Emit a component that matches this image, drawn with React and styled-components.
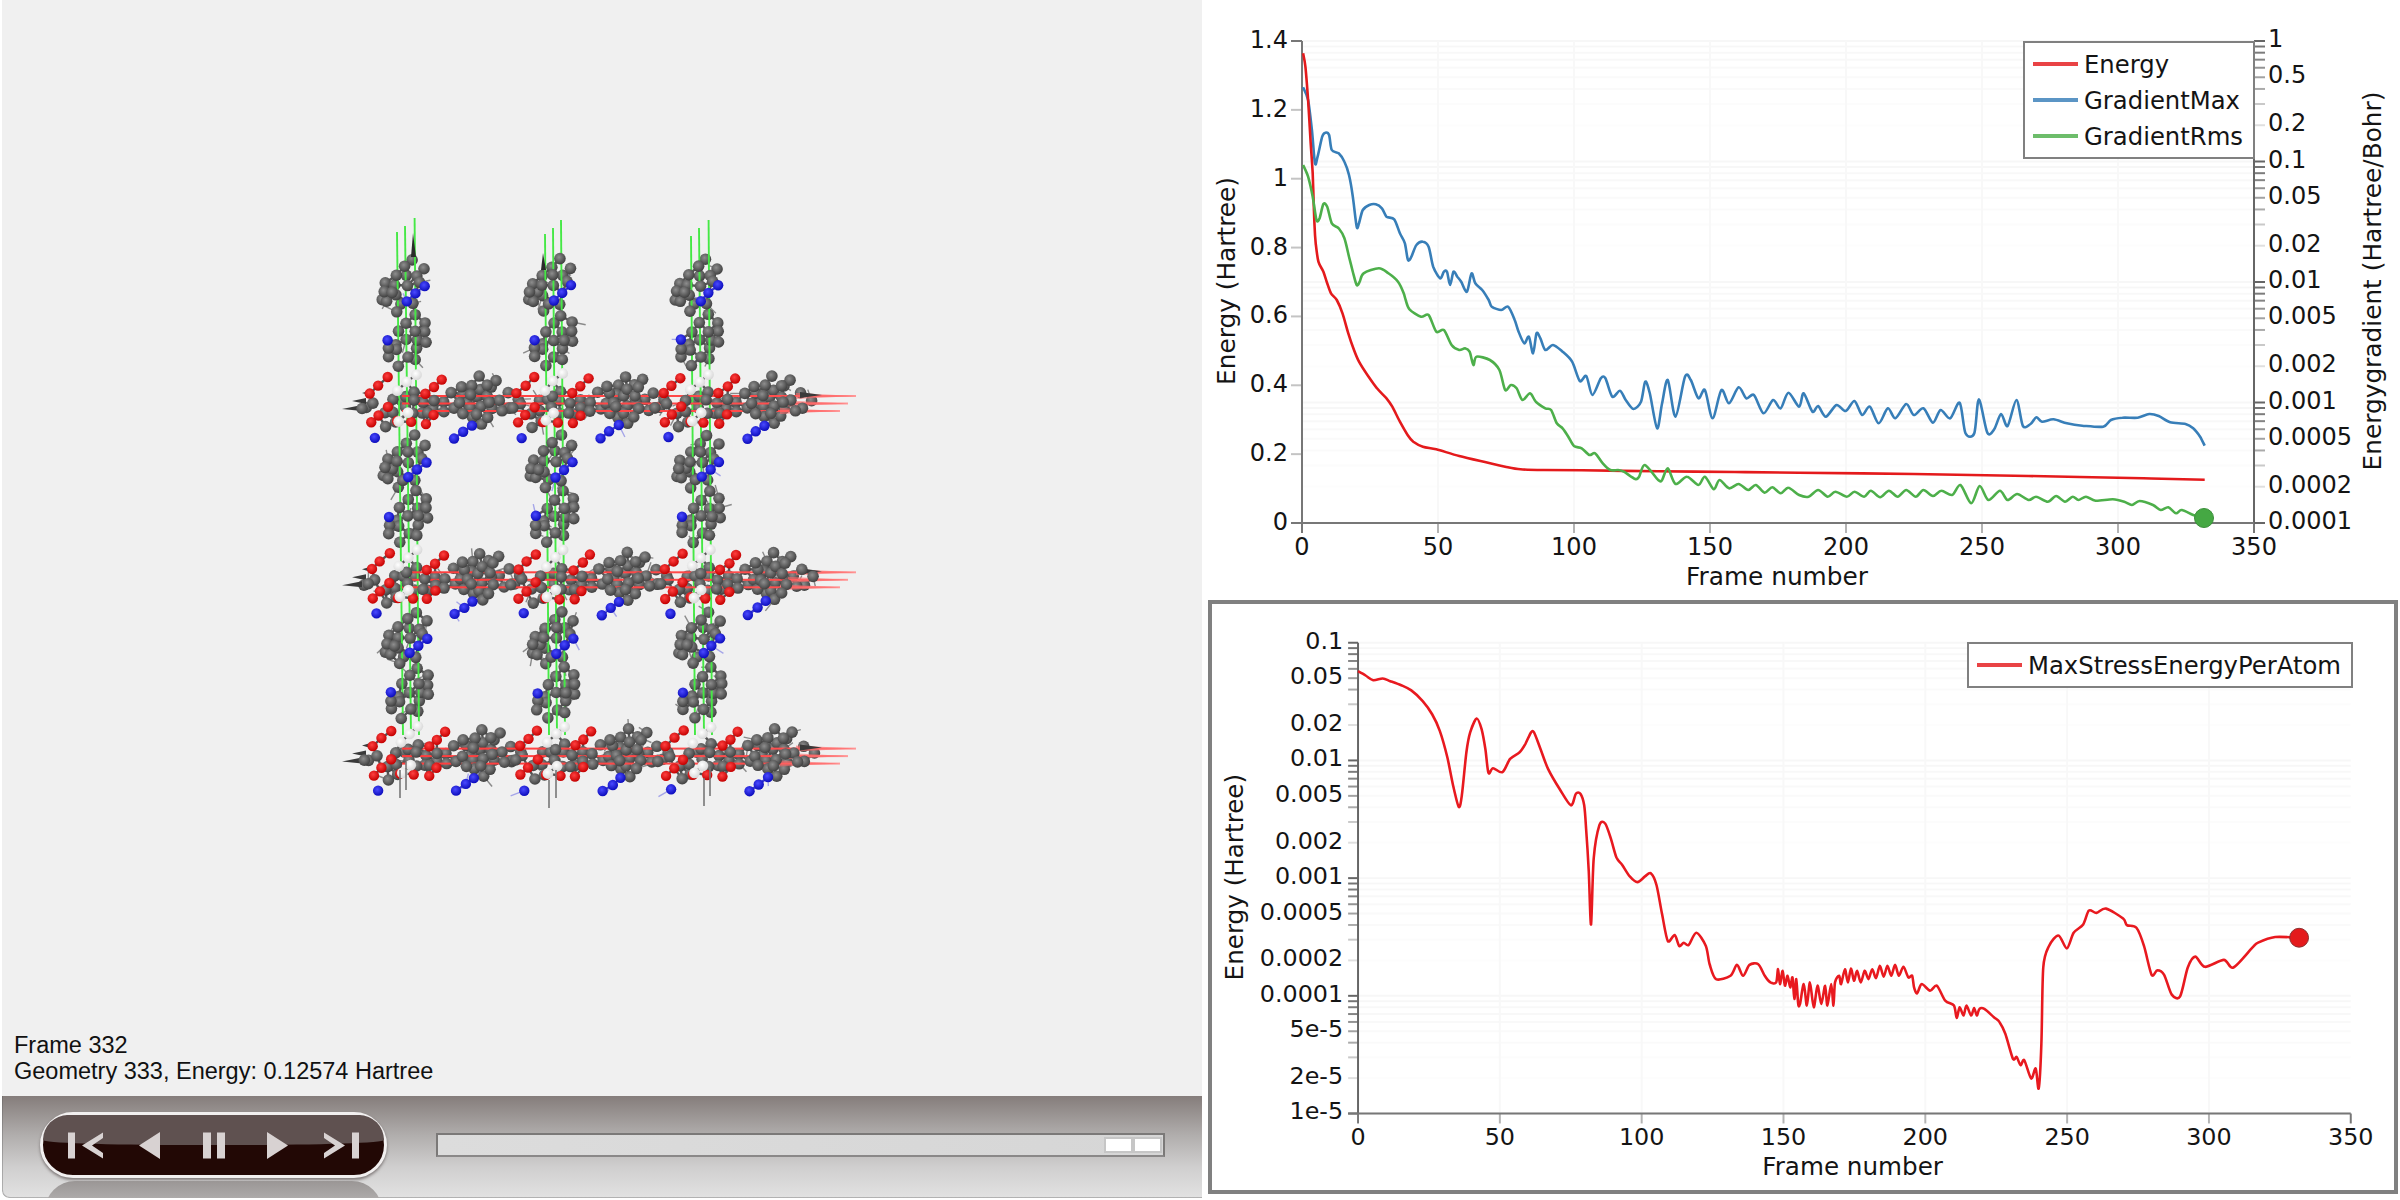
import React from 'react';
import styled, { createGlobalStyle } from 'styled-components';

const GlobalStyle = createGlobalStyle`
  html, body {
    margin: 0;
    padding: 0;
    background: #ffffff;
  }
  #root {
    width: 2400px;
    height: 1200px;
    overflow: hidden;
  }
`;

const Page = styled.div`
  display: flex;
  width: 2400px;
  height: 1200px;
  background: #ffffff;
`;

/* ---------- left side: the movie viewer ---------- */

const ViewerPanel = styled.div`
  display: flex;
  flex-direction: column;
  width: 1200px;
  height: 1198px;
  margin-left: 2px;
  border-bottom-left-radius: 7px;
  overflow: hidden;
`;

const Viewport = styled.div`
  display: flex;
  flex-direction: column;
  height: 1096px;
  background: #f0f0f0;
`;

const MoleculeSvg = styled.svg`
  display: block;
  width: 1200px;
  height: 1032px;
  filter: blur(0.6px);
`;

const FrameInfo = styled.div`
  height: 64px;
  padding-left: 12px;
  font-family: 'Liberation Sans', Arial, sans-serif;
  font-size: 23.5px;
  line-height: 26px;
  color: #111111;
`;

const ControlBar = styled.div`
  display: flex;
  align-items: center;
  gap: 49px;
  height: 102px;
  box-sizing: border-box;
  padding: 0 37px 4px 38px;
  border-bottom-left-radius: 7px;
  background: linear-gradient(#857d7b, #b0adac 38%, #d0cfcf 70%, #e2e2e2);
  box-shadow: inset 1px -1px 0 rgba(90, 90, 90, 0.35);
`;

const PlayerPill = styled.div`
  position: relative;
  display: flex;
  justify-content: center;
  align-items: center;
  flex: none;
  width: 347px;
  height: 66px;
  box-sizing: border-box;
  border: 3px solid #f2f0f0;
  border-radius: 33px;
  background: #220805;
  box-shadow: 0 2px 3px rgba(60, 50, 50, 0.55);

  /* glossy upper half */
  &::before {
    content: '';
    position: absolute;
    top: 0;
    left: 0;
    right: 0;
    height: 30px;
    border-radius: 30px 30px 50% 50% / 30px 30px 6px 6px;
    background: #5f5150;
  }

  /* reflection below the pill */
  &::after {
    content: '';
    position: absolute;
    top: 66px;
    left: 2px;
    right: 2px;
    height: 34px;
    border-radius: 30px 30px 0 0;
    background: linear-gradient(#9a9695, #c0bebe);
  }
`;

const PlayerButton = styled.div`
  position: relative;
  z-index: 1;
  display: flex;
  justify-content: center;
  align-items: center;
  width: 64px;
  height: 28px;

  svg {
    display: block;
    height: 27px;
    fill: #d8d2d2;
  }
`;

const Scrubber = styled.div`
  display: flex;
  justify-content: flex-end;
  align-items: center;
  gap: 4px;
  width: 729px;
  height: 24px;
  box-sizing: border-box;
  padding-right: 3px;
  border: 2px solid #7b7978;
  border-bottom-color: #8a8888;
  background: linear-gradient(90deg, #dcdcdc, #d6d6d6);
`;

const ScrubThumb = styled.div`
  width: 25px;
  height: 12px;
  background: #ffffff;
  box-shadow: 0 0 0 2px #c6c6c6;
`;

/* ---------- right side: the two plots ---------- */

const PlotColumn = styled.div`
  display: flex;
  flex-direction: column;
  width: 1198px;
  height: 1200px;
`;

const EnergyPanel = styled.div`
  position: relative;
  height: 600px;
`;

const StressPanel = styled.div`
  position: relative;
  height: 594px;
  margin: 0 2px 2px 6px;
  box-sizing: border-box;
  border: 4px solid #808080;
`;

const PlotSvg = styled.svg`
  display: block;
  width: 100%;
  height: 100%;
`;

const TickLabel = styled.text`
  font-family: 'DejaVu Sans', sans-serif;
  font-size: 24px;
  fill: #141414;
  text-anchor: ${({ $anchor }) => $anchor || 'middle'};
`;

const AxisTitle = styled.text`
  font-family: 'DejaVu Sans', sans-serif;
  font-size: 24.8px;
  fill: #141414;
  text-anchor: middle;
`;

const Legend = styled.div`
  position: absolute;
  left: ${({ $left }) => $left}px;
  top: ${({ $top }) => $top}px;
  padding: 3px 10px 3px 8px;
  border: 2px solid #808080;
  background: #ffffff;
`;

const LegendRow = styled.div`
  display: flex;
  align-items: center;
  gap: 6px;
  height: 36px;
  font-family: 'DejaVu Sans', sans-serif;
  font-size: 24.3px;
  color: #141414;
  white-space: nowrap;
`;

const LegendSwatch = styled.span`
  display: block;
  width: 45px;
  height: 4px;
  background: ${({ $color }) => $color};
  opacity: 0.82;
`;

/* ---------- chart data, read off as crops of the page ---------- */

const crop = (ox, oy) => (pts) => pts.map(([x, y]) => [ox + x / 2.613, oy + y / 3]);

// catmull-rom through the read-off points, the curves in the plots are smooth
const toSmoothPath = (pts) => {
  let d = `M${pts[0][0].toFixed(1)} ${pts[0][1].toFixed(1)}`;
  for (let i = 0; i < pts.length - 1; i++) {
    const p0 = pts[i - 1] || pts[i];
    const p1 = pts[i];
    const p2 = pts[i + 1];
    const p3 = pts[i + 2] || p2;
    const c1x = p1[0] + (p2[0] - p0[0]) / 7;
    const c1y = p1[1] + (p2[1] - p0[1]) / 7;
    const c2x = p2[0] - (p3[0] - p1[0]) / 7;
    const c2y = p2[1] - (p3[1] - p1[1]) / 7;
    d += `C${c1x.toFixed(1)} ${c1y.toFixed(1)} ${c2x.toFixed(1)} ${c2y.toFixed(1)} ${p2[0].toFixed(1)} ${p2[1].toFixed(1)}`;
  }
  return d;
};

const topL = crop(1200, 0);
const midL = crop(1200, 300);
const midR = crop(1800, 300);

const energyCurve = [
  ...topL([[272,160],[278,200],[285,300],[292,430],[297,520],[300,620],[302,680],[305,730],[312,785],[325,815],[335,850],[345,880],[360,900]]),
  ...midL([[375,40],[390,100],[405,150],[418,185],[440,225],[465,265],[490,295],[505,320],[525,365],[545,405],[560,425],[585,440],[620,448],[680,468],[750,487],[800,500],[840,508],[900,510],[1000,511],[1200,514],[1400,516],[1568,518]]),
  ...midR([[300,522],[600,528],[900,535],[1060,539]]),
];

const gradientMaxCurve = [
  ...topL([[272,262],[285,300],[295,390],[303,490],[310,470],[322,410],[330,398],[340,405],[347,450],[365,460],[380,485],[392,525],[402,590],[412,680],[418,670],[428,630],[445,615],[462,613],[478,625],[490,650],[510,658],[525,700],[538,730],[546,780],[555,770],[568,735],[585,725],[600,740],[612,800],[630,835],[640,815],[648,815],[656,855],[665,815],[675,830],[685,845],[700,875],[712,820],[722,850],[740,870],[757,900]]),
  ...midL([[765,20],[790,30],[808,20],[825,60],[835,95],[850,130],[862,110],[873,160],[882,100],[892,115],[905,150],[925,135],[950,155],[975,185],[995,243],[1012,228],[1028,285],[1050,235],[1062,235],[1080,290],[1100,272],[1115,300],[1135,327],[1155,305],[1166,245],[1178,280],[1197,385],[1210,310],[1225,240],[1245,350],[1270,230],[1285,240],[1305,295],[1322,270],[1342,355],[1365,270],[1385,310],[1410,262],[1430,295],[1450,285],[1475,340],[1500,300],[1520,325],[1540,278],[1568,320]]),
  ...midR([[12,280],[35,335],[50,318],[70,350],[98,315],[122,333],[145,303],[165,345],[185,320],[208,370],[232,325],[252,355],[280,312],[300,345],[325,325],[350,368],[370,330],[395,355],[420,308],[435,400],[458,400],[470,298],[492,398],[510,388],[528,342],[545,378],[568,300],[585,378],[605,372],[620,352],[635,365],[665,358],[700,370],[740,377],[795,380],[815,360],[845,353],[885,353],[915,342],[940,348],[970,367],[1010,372],[1030,385],[1048,410],[1060,437]]),
];

const gradientRmsCurve = [
  ...topL([[272,495],[285,530],[297,590],[307,660],[315,655],[325,612],[335,620],[347,670],[365,685],[380,715],[392,770],[402,815],[412,855],[420,845],[430,820],[470,805],[495,820],[520,845],[535,880],[540,900]]),
  ...midL([[550,28],[580,50],[600,45],[620,95],[640,90],[660,135],[680,150],[695,145],[707,155],[717,195],[725,170],[760,180],[785,210],[800,270],[815,255],[830,265],[845,300],[865,280],[880,305],[905,325],[920,330],[935,370],[950,385],[965,410],[980,438],[1000,445],[1020,465],[1035,460],[1055,490],[1075,510],[1095,510],[1110,515],[1140,537],[1150,530],[1165,495],[1200,540],[1210,540],[1225,505],[1245,552],[1275,530],[1305,555],[1322,530],[1345,568],[1360,540],[1385,565],[1410,552],[1435,570],[1455,555],[1478,578],[1498,562],[1520,580],[1540,563],[1568,585]]),
  ...midR([[25,590],[50,570],[75,590],[95,575],[125,590],[145,575],[170,590],[188,572],[212,592],[235,572],[258,590],[280,570],[305,590],[325,570],[350,588],[372,572],[400,585],[422,555],[450,610],[472,558],[495,600],[525,572],[545,600],[570,582],[600,600],[620,590],[650,605],[672,588],[695,605],[715,590],[730,600],[750,590],[775,602],[820,598],[850,605],[870,615],[890,603],[925,615],[945,630],[965,622],[985,640],[1000,630],[1030,645],[1058,655]]),
];

const stressCurve = [
  ...crop(1200, 590)([[405,245],[425,258],[445,272],[470,267],[490,275],[520,288],[545,303],[575,335],[600,375],[620,425],[640,505],[655,590],[670,655],[678,620],[690,490],[700,430],[717,388],[730,420],[740,480],[748,552],[760,538],[785,550],[805,510],[830,490],[845,465],[860,430],[868,430],[885,480],[905,540],[935,600],[965,650],[978,615],[990,615],[1000,650],[1005,720],[1012,850],[1018,1010],[1025,810],[1040,710],[1055,705],[1070,750],[1085,808],[1100,830],[1120,865],[1140,882],[1160,865],[1175,855],[1190,890]]),
  ...crop(1200, 890)([[1205,80],[1220,160],[1238,142],[1250,175],[1262,165],[1275,172],[1295,135],[1320,175],[1330,230],[1347,275],[1385,265],[1402,232],[1418,265],[1435,232],[1458,230],[1475,265],[1490,285],[1505,285],[1510,245],[1515,290],[1522,250],[1528,295],[1535,265],[1542,300],[1548,270],[1553,335],[1558,275],[1563,350]]),
  ...crop(1800, 890)([[0,350],[10,290],[18,355],[26,285],[36,360],[46,295],[56,350],[66,295],[72,355],[82,290],[88,355],[92,285],[103,265],[108,290],[118,245],[126,285],[134,243],[142,280],[150,250],[160,285],[170,250],[180,275],[190,245],[200,272],[210,235],[220,268],[230,235],[240,265],[250,232],[260,265],[272,238],[285,270],[295,265],[300,300],[308,318],[320,290],[342,310],[360,295],[382,340],[405,355],[412,392],[420,360],[430,385],[438,355],[450,385],[458,362],[465,385],[472,365],[485,365],[510,390],[525,405],[540,440],[560,515],[570,510],[580,535],[590,520],[608,575],[620,545],[628,605],[635,470],[640,240],[655,175],[680,143],[702,182],[720,135],[745,110],[760,68],[780,75],[805,62],[850,92],[860,112],[885,120],[905,175],[925,262],[940,248],[958,262],[978,322],[1000,327],[1020,240],[1040,207],[1065,238],[1115,217],[1140,240],[1190,180],[1205,165],[1250,148],[1313,150]]),
];

const RED = '#e41a1c';
const BLUE = '#377eb8';
const GREEN = '#4daf4a';

// fading of the minor log ticks, strongest next to the decade line
const tickFade = { 10: 1, 9: 0.9, 8: 0.85, 7: 0.8, 6: 0.7, 5: 0.6, 4: 0.55, 3: 0.35, 2: 0.2 };

const logTicks = (top, decades, perDecade) => {
  const ticks = [];
  for (let d = 0; d < decades; d++) {
    for (let m = 10; m >= 2; m--) {
      ticks.push({ y: top + perDecade * (d + Math.log10(10 / m)), fade: tickFade[m] });
    }
  }
  ticks.push({ y: top + perDecade * decades, fade: 1 });
  return ticks;
};

const LogGrid = ({ ticks, x1, x2 }) =>
  ticks.map((t, i) => (
    <line key={i} x1={x1} x2={x2} y1={t.y} y2={t.y} stroke="#f7f7f7" strokeWidth="2" opacity={t.fade} />
  ));

const LogTickMarks = ({ ticks, x1, x2, color }) =>
  ticks.map((t, i) => (
    <line key={i} x1={x1} x2={x2} y1={t.y} y2={t.y} stroke={color} strokeWidth="2" opacity={t.fade} />
  ));

const Curve = ({ points, color, width = 2.6 }) => (
  <path d={toSmoothPath(points)} fill="none" stroke={color} strokeWidth={width} strokeLinejoin="round" />
);

const FRAME_TICKS = [0, 50, 100, 150, 200, 250, 300, 350];

const EnergyPlot = () => {
  const x0 = 1303;
  const x1 = 2255;
  const y0 = 523;
  const top = 41;
  const frameX = (f) => x0 + (f / 350) * (x1 - x0);
  const energyY = (v) => y0 - (v / 1.4) * (y0 - top);
  const ticks = logTicks(top, 4, 120.5);
  const rightLabels = ['1', '0.5', '0.2', '0.1', '0.05', '0.02', '0.01', '0.005', '0.002', '0.001', '0.0005', '0.0002', '0.0001'];
  const rightValues = [1, 0.5, 0.2, 0.1, 0.05, 0.02, 0.01, 0.005, 0.002, 0.001, 0.0005, 0.0002, 0.0001];

  return (
    <PlotSvg viewBox="1204 0 1196 600">
      <LogGrid ticks={ticks} x1={x0} x2={x1} />
      {FRAME_TICKS.slice(1, -1).map((f) => (
        <line key={f} x1={frameX(f)} x2={frameX(f)} y1={top} y2={y0} stroke="#f8f8f8" strokeWidth="2" />
      ))}
      {[1.4, 1.2, 1, 0.8, 0.6, 0.4, 0.2, 0].map((v, i) => (
        <g key={v}>
          <line x1="1292" x2={x0} y1={energyY(v)} y2={energyY(v)} stroke={i === 0 || v === 0 ? '#777' : '#c4c4c4'} strokeWidth="2" />
          <TickLabel $anchor="end" x="1289" y={energyY(v) + 7}>{v}</TickLabel>
        </g>
      ))}
      {FRAME_TICKS.map((f) => (
        <g key={f}>
          <line x1={frameX(f)} x2={frameX(f)} y1={y0} y2="533" stroke={f === 0 || f === 350 ? '#777' : '#b4b4b4'} strokeWidth="2" />
          <TickLabel x={frameX(f)} y="555">{f}</TickLabel>
        </g>
      ))}
      <LogTickMarks ticks={ticks} x1={x1} x2="2266" color="#666" />
      {rightValues.map((v, i) => (
        <TickLabel key={v} $anchor="start" x="2269" y={top + 120.5 * -Math.log10(v) + 6}>{rightLabels[i]}</TickLabel>
      ))}
      <line x1={x0} x2={x0} y1={top} y2={y0} stroke="#777" strokeWidth="2" />
      <line x1={x1} x2={x1} y1={top} y2={y0} stroke="#666" strokeWidth="2" />
      <line x1={x0 - 11} x2={x1} y1={y0} y2={y0} stroke="#777" strokeWidth="2" />
      <Curve points={gradientMaxCurve} color={BLUE} />
      <Curve points={energyCurve} color={RED} />
      <Curve points={gradientRmsCurve} color={GREEN} />
      <circle cx="2205" cy="518" r="9.5" fill="#45a843" stroke="#3b8f3a" strokeWidth="1" />
      <AxisTitle x="1778" y="585">Frame number</AxisTitle>
      <AxisTitle transform="translate(1236 281) rotate(-90)">Energy (Hartree)</AxisTitle>
      <AxisTitle transform="translate(2382 281) rotate(-90)">Energygradient (Hartree/Bohr)</AxisTitle>
    </PlotSvg>
  );
};

const StressPlot = () => {
  const x0 = 1355;
  const x1 = 2354.5;
  const y0 = 1117;
  const top = 643;
  const frameX = (f) => x0 + (f / 350) * (x1 - x0);
  const ticks = logTicks(top, 4, 118.5);
  const labels = [
    ['0.1', 0.1], ['0.05', 0.05], ['0.02', 0.02], ['0.01', 0.01], ['0.005', 0.005], ['0.002', 0.002], ['0.001', 0.001],
    ['0.0005', 0.0005], ['0.0002', 0.0002], ['0.0001', 0.0001], ['5e-5', 5e-5], ['2e-5', 2e-5], ['1e-5', 1e-5],
  ];

  return (
    <PlotSvg viewBox="1212 604 1182 590">
      <LogGrid ticks={ticks} x1={x0} x2={x1} />
      {FRAME_TICKS.slice(1, -1).map((f) => (
        <line key={f} x1={frameX(f)} x2={frameX(f)} y1={top} y2={y0} stroke="#f8f8f8" strokeWidth="2" />
      ))}
      <LogTickMarks ticks={ticks} x1="1345" x2={x0} color="#666" />
      {labels.map(([text, v]) => (
        <TickLabel key={text} $anchor="end" x="1340" y={top + 118.5 * (-1 - Math.log10(v)) + 6}>{text}</TickLabel>
      ))}
      {FRAME_TICKS.map((f) => (
        <g key={f}>
          <line x1={frameX(f)} x2={frameX(f)} y1={y0} y2="1127" stroke={f === 0 || f === 350 ? '#777' : '#b4b4b4'} strokeWidth="2" />
          <TickLabel x={frameX(f)} y="1149">{f}</TickLabel>
        </g>
      ))}
      <line x1={x0} x2={x0} y1={top} y2={y0} stroke="#666" strokeWidth="2" />
      <line x1="1345" x2={x1} y1={y0} y2={y0} stroke="#777" strokeWidth="2" />
      <Curve points={stressCurve} color="#e8191f" />
      <circle cx="2302.5" cy="940" r="9.5" fill="#e41a1c" stroke="#8a3030" strokeWidth="1" />
      <AxisTitle x="1853" y="1179">Frame number</AxisTitle>
      <AxisTitle transform="translate(1239 879) rotate(-90)">Energy (Hartree)</AxisTitle>
    </PlotSvg>
  );
};

/* ---------- the framework drawn in the viewport ---------- */

// atom positions of one repeating cell, as read from a crop (x / 2.8 + 320, y / 3 + 200)
const CELL_ATOMS = {
  gray: [
    [260,178],[238,200],[292,205],[212,225],[243,225],[270,228],[185,250],[245,258],[175,300],[212,285],[188,305],[215,333],
    [210,255],[200,278],[228,312],[262,312],[178,275],[280,245],
    [265,345],[243,370],[295,368],[268,395],[243,420],[297,425],[270,445],[245,470],[190,470],[220,498],
    [220,395],[212,432],[272,420],[215,448],[295,395],[190,445],[268,478],
    [118,625],[228,600],[205,635],[318,625],[265,575],[345,605],[185,680],[210,665],
    [320,600],[290,610],[262,600],[240,622],[205,600],[180,640],[150,610],[130,622],[262,640],[285,640],[300,640],[240,590],
    [368,578],[400,580],[425,555],[440,590],[375,625],[445,530],[495,540],[525,580],[500,600],[480,625],[425,650],[450,670],[530,625],[450,570],[470,555],[410,610],
    [390,610],[420,622],[450,620],[470,590],[510,630],[555,600],[420,585],[480,560],[440,642],[470,650],[400,640],[345,635],[475,605],[395,560],
  ],
  red: [[190,533],[342,537],[165,557],[140,580],[297,580],[320,560],[190,620],[165,645],[143,668],[297,670],[320,645],[215,665],[255,668]],
  white: [[268,522],[243,545],[218,570],[245,640],[222,663]],
  blue: [[293,257],[268,280],[245,302],[190,420],[155,712],[375,715],[400,695],[425,675]],
};

const ATOM_RADIUS = { gray: 5.8, red: 5.2, white: 5.4, blue: 5.2 };
const COL_STEP = 146.5;
const ROW_STEP = 176.3;

const random = (() => {
  let seed = 1337;
  return () => {
    seed = (seed * 16807) % 2147483647;
    return seed / 2147483647;
  };
})();

const buildFramework = () => {
  const atoms = [];
  const sticks = [];
  for (let row = 0; row < 3; row++) {
    for (let col = 0; col < 3; col++) {
      const cellAtoms = [];
      Object.entries(CELL_ATOMS).forEach(([kind, list]) => {
        list.forEach(([zx, zy]) => {
          const x = zx / 2.8 + 320 + col * COL_STEP + row * 1.4 + (random() - 0.5) * 1.6;
          const y = zy / 3 + 200 + row * ROW_STEP + (random() - 0.5) * 1.6;
          cellAtoms.push({ kind, x, y });
        });
      });
      for (let i = 0; i < cellAtoms.length; i++) {
        for (let j = i + 1; j < cellAtoms.length; j++) {
          const a = cellAtoms[i];
          const b = cellAtoms[j];
          if (Math.hypot(a.x - b.x, a.y - b.y) < 13.5) {
            const isBlue = a.kind === 'blue' && b.kind === 'blue';
            sticks.push({ x1: a.x, y1: a.y, x2: b.x, y2: b.y, color: isBlue ? '#3a3ad0' : '#555555', width: 2.4 });
          }
        }
        // hydrogens poking out
        const a = cellAtoms[i];
        if ((a.kind === 'gray' || a.kind === 'blue') && random() < 0.45) {
          const angle = random() * Math.PI * 2;
          const length = 8 + random() * 7;
          sticks.push({
            x1: a.x, y1: a.y,
            x2: a.x + Math.cos(angle) * length,
            y2: a.y + Math.sin(angle) * length,
            color: a.kind === 'blue' ? '#a5a5e8' : '#8a8a8a',
            width: 1.4,
          });
        }
      }
      atoms.push(...cellAtoms);
    }
  }
  return { atoms, sticks };
};

const framework = buildFramework();
const grayAtoms = framework.atoms.filter((a) => a.kind === 'gray');
const atomsBelow = grayAtoms.filter((_, i) => i % 2 === 0);
const atomsMiddle = grayAtoms.filter((_, i) => i % 2 === 1);
const atomsOnTop = framework.atoms.filter((a) => a.kind !== 'gray');

const GREEN_BONDS = [
  [[397, 232], [403, 735]], [[405, 226], [411, 735]], [[414.6, 218], [419, 735]],
  [[545, 234], [549, 735]], [[553, 228], [557, 735]], [[561, 220], [565, 735]],
  [[691, 236], [695, 735]], [[699, 228], [704, 735]], [[708.6, 220], [712, 735]],
];

const RED_TAILS = [
  { y: 396, end: 856 },
  { y: 403.5, end: 848 },
  { y: 411, end: 840 },
];

const AtomLayer = ({ atoms }) =>
  atoms.map((a, i) => (
    <circle key={i} cx={a.x} cy={a.y} r={ATOM_RADIUS[a.kind]} fill={`url(#atom-${a.kind})`} />
  ));

const ROW_YS = [0, 1, 2].map((r) => r * ROW_STEP);

const Molecule = () => (
  <MoleculeSvg viewBox="2 0 1200 1032">
    <defs>
      <radialGradient id="atom-gray" cx="42%" cy="38%" r="62%">
        <stop offset="0%" stopColor="#8e8e8e" />
        <stop offset="100%" stopColor="#404040" />
      </radialGradient>
      <radialGradient id="atom-red" cx="42%" cy="38%" r="62%">
        <stop offset="0%" stopColor="#ff4040" />
        <stop offset="100%" stopColor="#c40000" />
      </radialGradient>
      <radialGradient id="atom-blue" cx="42%" cy="38%" r="62%">
        <stop offset="0%" stopColor="#4a4aff" />
        <stop offset="100%" stopColor="#0c0cbc" />
      </radialGradient>
      <radialGradient id="atom-white" cx="42%" cy="38%" r="62%">
        <stop offset="0%" stopColor="#ffffff" />
        <stop offset="100%" stopColor="#d8d8d8" />
      </radialGradient>
      <linearGradient id="red-tail" x1="0" x2="1" y1="0" y2="0">
        <stop offset="0%" stopColor="#ff3c3c" />
        <stop offset="88%" stopColor="#ff4f4f" />
        <stop offset="100%" stopColor="#ff9c9c" />
      </linearGradient>
    </defs>
    {framework.sticks.map((s, i) => (
      <line key={i} x1={s.x1} y1={s.y1} x2={s.x2} y2={s.y2} stroke={s.color} strokeWidth={s.width} />
    ))}
    <AtomLayer atoms={atomsBelow} />
    {GREEN_BONDS.map(([a, b], i) => (
      <line key={i} x1={a[0]} y1={a[1]} x2={b[0]} y2={b[1]} stroke="#45e845" strokeWidth="1.9" />
    ))}
    {ROW_YS.map((dy, r) => (
      <g key={r}>
        {RED_TAILS.map((tail) => (
          <g key={tail.y}>
            <rect x="402" y={tail.y - 1 + dy} width={tail.end - 402} height="2" fill="url(#red-tail)" />
            <polygon
              points={`${tail.end - 60},${tail.y - 3 + dy} ${tail.end},${tail.y + dy} ${tail.end - 60},${tail.y + 3 + dy}`}
              fill="#ff6a6a"
              opacity="0.6"
            />
          </g>
        ))}
        <polygon points={`342,${409 + dy} 362,${405 + dy} 362,${411 + dy}`} fill="#3a3a3a" />
        <polygon points={`352,${401 + dy} 366,${398 + dy} 366,${404 + dy}`} fill="#3a3a3a" />
        <polygon points={`362,${393 + dy} 372,${390 + dy} 372,${396 + dy}`} fill="#3a3a3a" />
        <polygon points={`822,${395 + dy} 800,${392 + dy} 800,${398 + dy}`} fill="#3a3a3a" />
      </g>
    ))}
    <polygon points="413,233 411,257 416,257" fill="#2a2a2a" />
    <polygon points="543,253 541,270 546,270" fill="#2a2a2a" />
    <AtomLayer atoms={atomsMiddle} />
    <AtomLayer atoms={atomsOnTop} />
    {[[400, 798], [406, 790], [549, 808], [556, 798], [704, 806], [710, 796]].map(([x, y], i) => (
      <line key={i} x1={x} x2={x} y1={y - 28} y2={y} stroke="#777777" strokeWidth="1.6" />
    ))}
  </MoleculeSvg>
);

/* ---------- player icons ---------- */

const SkipBackIcon = () => (
  <svg viewBox="0 0 35 27">
    <rect x="0" y="0.5" width="7" height="26" />
    <polygon points="35,0.5 14,13.5 35,26.5 35,21 24,13.5 35,6" />
  </svg>
);

const BackIcon = () => (
  <svg viewBox="0 0 21 27">
    <polygon points="0,13.5 21,0 21,27" />
  </svg>
);

const PauseIcon = () => (
  <svg viewBox="0 0 22 27">
    <rect x="0" y="0.5" width="8" height="26" />
    <rect x="14" y="0.5" width="8" height="26" />
  </svg>
);

const ForwardIcon = () => (
  <svg viewBox="0 0 21 27">
    <polygon points="21,13.5 0,0 0,27" />
  </svg>
);

const SkipForwardIcon = () => (
  <svg viewBox="0 0 35 27">
    <rect x="28" y="0.5" width="7" height="26" />
    <polygon points="0,0.5 21,13.5 0,26.5 0,21 11,13.5 0,6" />
  </svg>
);

const PLAYER_ICONS = [SkipBackIcon, BackIcon, PauseIcon, ForwardIcon, SkipForwardIcon];

const energyLegend = [
  { label: 'Energy', color: RED },
  { label: 'GradientMax', color: BLUE },
  { label: 'GradientRms', color: GREEN },
];

const App = () => (
  <>
    <GlobalStyle />
    <Page>
      <ViewerPanel>
        <Viewport>
          <Molecule />
          <FrameInfo>
            <div>Frame 332</div>
            <div>Geometry 333, Energy: 0.12574 Hartree</div>
          </FrameInfo>
        </Viewport>
        <ControlBar>
          <PlayerPill>
            {PLAYER_ICONS.map((Icon, i) => (
              <PlayerButton key={i}>
                <Icon />
              </PlayerButton>
            ))}
          </PlayerPill>
          <Scrubber>
            <ScrubThumb />
            <ScrubThumb />
          </Scrubber>
        </ControlBar>
      </ViewerPanel>
      <PlotColumn>
        <EnergyPanel>
          <EnergyPlot />
          <Legend $left={821} $top={41}>
            {energyLegend.map((item) => (
              <LegendRow key={item.label}>
                <LegendSwatch $color={item.color} />
                {item.label}
              </LegendRow>
            ))}
          </Legend>
        </EnergyPanel>
        <StressPanel>
          <StressPlot />
          <Legend $left={755} $top={38}>
            <LegendRow>
              <LegendSwatch $color={RED} />
              MaxStressEnergyPerAtom
            </LegendRow>
          </Legend>
        </StressPanel>
      </PlotColumn>
    </Page>
  </>
);

export default App;
